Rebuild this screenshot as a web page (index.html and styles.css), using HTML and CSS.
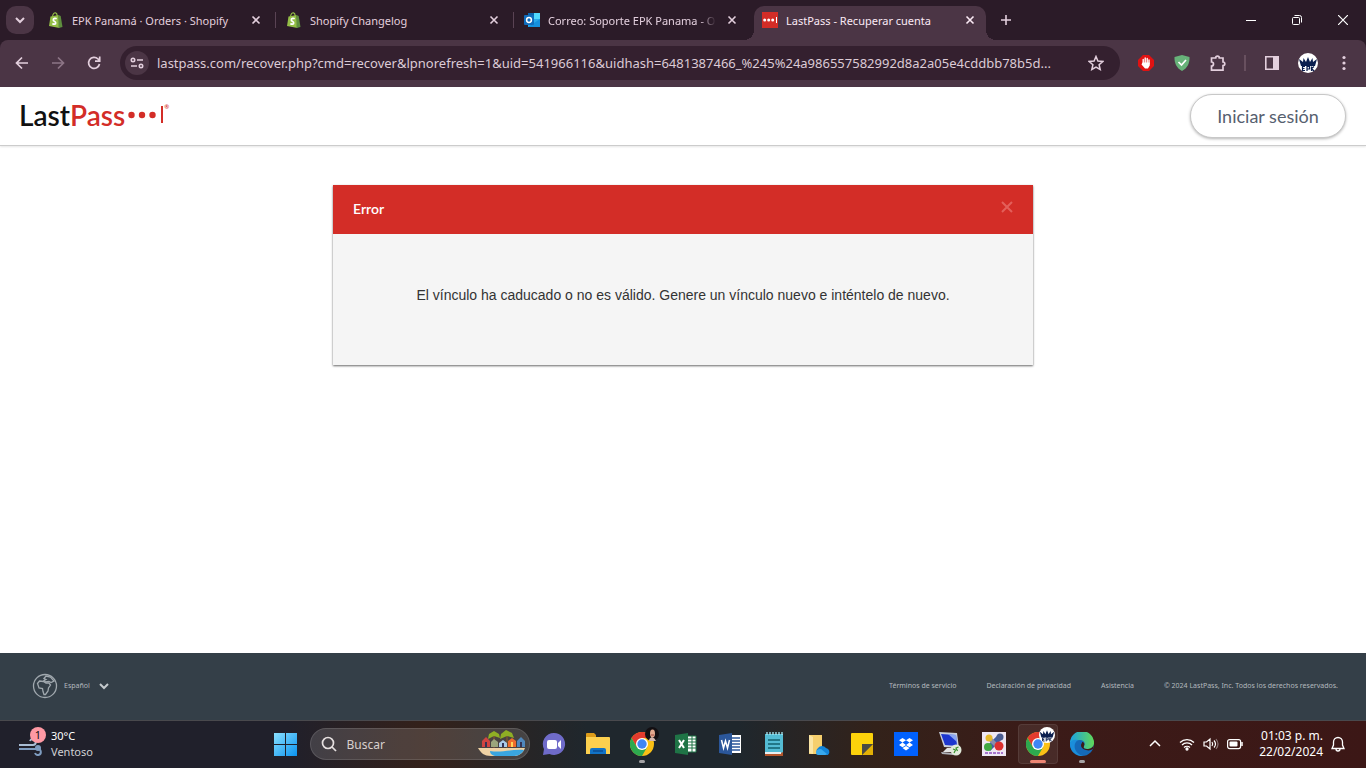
FILE: index.html
```html
<!DOCTYPE html>
<html lang="es">

<head>
    <meta charset="UTF-8">
    <meta name="viewport" content="width=device-width, initial-scale=1.0">
    <title>LastPass - Recuperar cuenta</title>
    <link rel="stylesheet" href="styles.css">
</head>

<body>
    <!-- Iconos compartidos -->
    <svg class="sprite" width="0" height="0" aria-hidden="true">
        <symbol id="i-close" viewBox="0 0 16 16">
            <path d="M4.500 4.500l7 7M11.500 4.500l-7 7" fill="none" stroke="currentColor" stroke-width="1.600" />
        </symbol>
        <symbol id="i-shopify" viewBox="0 0 16 16">
            <path d="M2.500 4.500L10.500 3l1 13L1 14z" fill="#95bf47" />
            <path d="M10.500 3l2.200 1L14.500 15l-4 1z" fill="#5e8e3e" />
            <path d="M4.500 4.500C5 1.500 6.500.6 7.500.8s1.600 1.200 1.700 3" fill="none" stroke="#95bf47" stroke-width="1.200" />
            <path d="M8.700 6.700C7.500 6 5.300 6.200 5.300 7.900c0 1.600 2.500 1.400 2.400 3.100 0 1.500-2 1.500-3.300.5" fill="none" stroke="#fff" stroke-width="1.700" />
        </symbol>
        <symbol id="i-chrome" viewBox="0 0 24 24">
            <circle cx="12" cy="12" r="12" fill="#fbc116" />
            <path d="M12 6h10.400A12 12 0 0 0 1.600 6L6.800 15z" fill="#e33b2e" />
            <path d="M1.600 6A12 12 0 0 0 12 24l5.200-9-5.200 3-5.200-3z" fill="#2da94f" />
            <circle cx="12" cy="12" r="6" fill="#fff" />
            <circle cx="12" cy="12" r="4.700" fill="#3f86f4" />
        </symbol>
        <symbol id="i-epk" viewBox="0 0 20 20">
            <circle cx="10" cy="10" r="10" fill="#fff" />
            <path d="M1 6l4 3 .5-4L8 9l2-5 2 5 2.500-4 .5 4 4-3-2 7H3z" fill="#0b1f4f" />
            <path d="M7 13.500H4.500v4H7M4.500 15.500h2M9 18v-4.500h2.500v2.500H9M13.500 13.500v4.500M16 13.500l-2.500 2 2.500 2.500" fill="none" stroke="#0b1f4f" stroke-width="1.200" />
        </symbol>
        <symbol id="i-chevron" viewBox="0 0 12 12">
            <path d="M2 4l4 4 4-4" fill="none" stroke="currentColor" stroke-width="2" />
        </symbol>
    </svg>

    <div class="tabstrip">
        <button class="tab-search" aria-label="Buscar pestañas"><svg width="12" height="12"><use href="#i-chevron" /></svg></button>
        <div class="tab">
            <svg class="favicon" viewBox="0 0 16 16"><use href="#i-shopify" /></svg>
            <span class="tab-title">EPK Panamá · Orders · Shopify</span>
            <button class="tab-close" aria-label="Cerrar"><svg width="16" height="16"><use href="#i-close" /></svg></button>
        </div>
        <div class="tab">
            <svg class="favicon" viewBox="0 0 16 16"><use href="#i-shopify" /></svg>
            <span class="tab-title">Shopify Changelog</span>
            <button class="tab-close" aria-label="Cerrar"><svg width="16" height="16"><use href="#i-close" /></svg></button>
        </div>
        <div class="tab tab-last">
            <svg class="favicon" viewBox="0 0 16 16">
                <path d="M4 1h12v14H4z" fill="#28a8ea" />
                <path d="M4 1h6v7H4z" fill="#0a64ad" />
                <path d="M10 1h6v6h-6z" fill="#50d9ff" />
                <path d="M4 15l12-8v8z" fill="#1490df" />
                <rect y="3" width="10" height="10" rx="1" fill="#0f6cbd" />
                <circle cx="5" cy="8" r="2.400" fill="none" stroke="#fff" stroke-width="1.500" />
            </svg>
            <span class="tab-title tab-fade">Correo: Soporte EPK Panama - O</span>
            <button class="tab-close" aria-label="Cerrar"><svg width="16" height="16"><use href="#i-close" /></svg></button>
        </div>
        <div class="tab tab-active">
            <svg class="favicon" viewBox="0 0 16 16">
                <rect width="16" height="16" fill="#d32d27" />
                <g fill="#fff">
                    <circle cx="2.700" cy="8" r="1.500" />
                    <circle cx="6.700" cy="8" r="1.500" />
                    <circle cx="10.700" cy="8" r="1.500" />
                    <path d="M14 5h1v6h-1z" />
                </g>
            </svg>
            <span class="tab-title">LastPass - Recuperar cuenta</span>
            <button class="tab-close" aria-label="Cerrar"><svg width="16" height="16"><use href="#i-close" /></svg></button>
        </div>
        <button class="tab-new" aria-label="Nueva pestaña">
            <svg width="12" height="12" viewBox="0 0 12 12"><path d="M6 1v10M1 6h10" stroke="currentColor" stroke-width="1.600" /></svg>
        </button>
        <div class="window-controls">
            <button aria-label="Minimizar"><svg width="10" height="10" viewBox="0 0 10 10"><path d="M0 5.500h10" stroke="#fff" /></svg></button>
            <button aria-label="Restaurar">
                <svg width="10" height="10" viewBox="0 0 10 10" fill="none" stroke="#fff">
                    <rect x=".5" y="2.500" width="7" height="7" rx="1" />
                    <path d="M2.500.5h5a2 2 0 0 1 2 2v5" />
                </svg>
            </button>
            <button aria-label="Cerrar ventana"><svg width="10" height="10" viewBox="0 0 10 10"><path d="M0 0l10 10M10 0L0 10" stroke="#fff" stroke-width="1.200" /></svg></button>
        </div>
    </div>

    <div class="toolbar">
        <button class="tool" aria-label="Atrás">
            <svg width="16" height="16" viewBox="0 0 16 16" fill="none" stroke="currentColor" stroke-width="1.700"><path d="M14 8H3M8 2.500L2.500 8 8 13.500" /></svg>
        </button>
        <button class="tool tool-off" aria-label="Adelante">
            <svg width="16" height="16" viewBox="0 0 16 16" fill="none" stroke="currentColor" stroke-width="1.700"><path d="M2 8h11M8 2.500L13.500 8 8 13.500" /></svg>
        </button>
        <button class="tool" aria-label="Recargar">
            <svg width="16" height="16" viewBox="0 0 16 16" fill="none" stroke="currentColor" stroke-width="1.700"><path d="M13.500 9A5.500 5.500 0 1 1 12 4l1.500 1.500M13.700 1.500v4.700H9" /></svg>
        </button>
        <div class="omnibox">
            <button class="site-info" aria-label="Información del sitio">
                <svg width="14" height="12" viewBox="0 0 14 12" fill="none" stroke="currentColor" stroke-width="1.600">
                    <circle cx="3" cy="3" r="1.700" />
                    <path d="M7 3h6M1 9h6" />
                    <circle cx="11" cy="9" r="1.700" />
                </svg>
            </button>
            <input class="url" type="text" aria-label="Dirección" value="lastpass.com/recover.php?cmd=recover&amp;lpnorefresh=1&amp;uid=541966116&amp;uidhash=6481387466_%245%24a986557582992d8a2a05e4cddbb78b5d...">
            <button class="star" aria-label="Añadir a marcadores">
                <svg width="16" height="16" viewBox="0 0 16 16"><path d="M8 1.500l1.900 4.600 4.900.4-3.700 3.200 1.100 4.800L8 12l-4.200 2.500 1.100-4.800L1.200 6.500l4.900-.4z" fill="none" stroke="currentColor" stroke-width="1.500" /></svg>
            </button>
        </div>
        <div class="extensions">
            <button class="tool" aria-label="AdBlock">
                <svg width="16" height="16" viewBox="0 0 16 16">
                    <path d="M5 0h6l5 5v6l-5 5H5l-5-5V5z" fill="#e01212" />
                    <path d="M5.200 9V4.500M7.200 8V3M9.200 8V3.500M11 9V5" stroke="#fff" stroke-width="1.400" stroke-linecap="round" />
                    <path d="M4.500 7.500h7.200v3L10 13.500H7l-3.500-4z" fill="#fff" />
                </svg>
            </button>
            <button class="tool" aria-label="AdGuard">
                <svg width="16" height="16" viewBox="0 0 16 16">
                    <path d="M8 0l7.500 2c.3 6-2 11-7.500 14C2.500 13 .2 8 .5 2z" fill="#67b279" />
                    <path d="M4.500 7l3 3 4.500-5" fill="none" stroke="#fff" stroke-width="1.700" />
                </svg>
            </button>
            <button class="tool" aria-label="Extensiones">
                <svg width="18" height="18" viewBox="0 0 18 18"><path d="M2.500 4h4.200a1.800 1.800 0 0 1 3.600 0H14v4a1.800 1.800 0 0 1 0 3.600v4.600H2.500V12a2 2 0 0 0 0-4z" fill="none" stroke="currentColor" stroke-width="1.700" /></svg>
            </button>
            <span class="tool-divider"></span>
            <button class="tool" aria-label="Panel lateral">
                <svg width="16" height="16" viewBox="0 0 16 16"><path d="M1.800 1.800h12.400v12.400H1.800z" fill="none" stroke="currentColor" stroke-width="1.600" /><path d="M9 1.500h5.500v13H9z" fill="currentColor" /></svg>
            </button>
            <button class="tool" aria-label="Perfil"><svg width="20" height="20"><use href="#i-epk" /></svg></button>
            <button class="tool" aria-label="Menú">
                <svg width="4" height="16" viewBox="0 0 4 16" fill="currentColor"><circle cx="2" cy="2.500" r="1.600" /><circle cx="2" cy="8" r="1.600" /><circle cx="2" cy="13.500" r="1.600" /></svg>
            </button>
        </div>
    </div>

    <header class="site-header">
        <a class="logo" href="#" aria-label="LastPass">
            <span class="logo-last">Last</span><span class="logo-pass">Pass</span>
            <svg width="36" height="18" viewBox="0 0 36 18" fill="#d32d27">
                <circle cx="3.500" cy="9" r="3.200" />
                <circle cx="14" cy="9" r="3.200" />
                <circle cx="24.500" cy="9" r="3.200" />
                <path d="M33 0h2v17h-2z" />
            </svg>
            <sup class="logo-mark">®</sup>
        </a>
        <button class="login">Iniciar sesión</button>
    </header>

    <main class="content">
        <section class="dialog">
            <div class="dialog-header">
                <h1>Error</h1>
                <button class="dialog-close" aria-label="Cerrar">
                    <svg width="12" height="12" viewBox="0 0 12 12"><path d="M1 1l10 10M11 1L1 11" stroke="currentColor" stroke-width="2" /></svg>
                </button>
            </div>
            <p class="dialog-body">El vínculo ha caducado o no es válido. Genere un vínculo nuevo e inténtelo de nuevo.</p>
        </section>
    </main>

    <footer class="site-footer">
        <label class="language">
            <svg width="26" height="26" viewBox="0 0 26 26" fill="none" stroke="currentColor" stroke-width="1.300">
                <circle cx="13" cy="13" r="11.500" />
                <path d="M5.500 10.500l2-2.500 4 .5 2.500 1.500h3l1.500 2-2 3-.5 3-2.500 3.500h-1.500l-1-3-.5-3-3.500-.5z" />
                <path d="M12 5.500l2-2.500 4.500 1 3.500 4-3 1.500-2-1-3.500.5-1.500-1.500 2-1z" />
            </svg>
            <select aria-label="Idioma">
                <option>Español</option>
            </select>
            <svg class="language-arrow" width="12" height="12"><use href="#i-chevron" /></svg>
        </label>
        <nav class="footer-links">
            <a href="#">Términos de servicio</a>
            <a href="#">Declaración de privacidad</a>
            <a href="#">Asistencia</a>
            <span>© 2024 LastPass, Inc. Todos los derechos reservados.</span>
        </nav>
    </footer>

    <div class="taskbar">
        <button class="weather">
            <span class="weather-icon">
                <svg width="26" height="24" viewBox="0 0 26 24" fill="none" stroke-width="2">
                    <path d="M0 13h14a3 3 0 1 0-3-4" stroke="#a9bdd4" />
                    <path d="M0 17h19a3 3 0 1 1-3 4" stroke="#7e9cc0" />
                    <circle cx="19" cy="16" r="3" fill="#7e9cc0" />
                </svg>
                <span class="weather-badge">1</span>
            </span>
            <span class="weather-text"><span>30°C</span><span class="weather-desc">Ventoso</span></span>
        </button>

        <div class="apps">
            <button class="app" aria-label="Inicio">
                <svg width="24" height="24" viewBox="0 0 24 24">
                    <defs><linearGradient id="win" x1="0" y1="0" x2="24" y2="24" gradientUnits="userSpaceOnUse"><stop stop-color="#8fe3ff" /><stop offset="1" stop-color="#0a93f0" /></linearGradient></defs>
                    <path d="M1 1h11v11H1zM13 1h11v11H13zM1 13h11v11H1zM13 13h11v11H13z" fill="url(#win)" />
                </svg>
            </button>
            <div class="search">
                <svg width="16" height="16" viewBox="0 0 16 16" fill="none" stroke="#e6e0e0" stroke-width="1.700"><circle cx="7" cy="7" r="5.500" /><path d="M11 11l4 4" /></svg>
                <input type="text" placeholder="Buscar" aria-label="Buscar">
                <svg class="search-art" width="50" height="28" viewBox="0 0 50 28">
                    <path d="M1 18h47c-2 5-5 7-9 8H14c-7 0-10-3-13-8z" fill="#efd2a4" />
                    <path d="M13 21c12 2 22-2 34-1-3 5-7 6-11 6H18c-3-1-5-2-5-5z" fill="#3aa5df" />
                    <path d="M17 6v12M30 6v12" stroke="#7a5230" stroke-width="1.500" />
                    <path d="M12 4l5-3 5 3 1 4-6-2-6 3zM24 4l5-4 6 3 2 5-7-2-7 3z" fill="#8fae24" />
                    <path d="M5 17v-6l4-4 4 4v6z" fill="#cf4440" />
                    <path d="M14 17v-5l3-3 4 3v5z" fill="#9aa67c" />
                    <path d="M22 17v-4l4-3 4 3v4z" fill="#a9cbea" />
                    <path d="M31 17v-6l4-3 4 3v6z" fill="#ee6b2c" />
                    <path d="M40 17v-6l4-4 4 4v6z" fill="#4f87bd" />
                    <path d="M8 17v-5h2v5zM25 17v-4h2v4zM43 17v-5h2v5z" fill="#335" />
                    <path d="M34 17v-5h2v5z" fill="#ffd35a" />
                </svg>
            </div>
            <button class="app" aria-label="Chat">
                <svg width="24" height="24" viewBox="0 0 24 24">
                    <path d="M12 1a11 11 0 1 1-4.500 21L1 23l1-6A11 11 0 0 1 12 1z" fill="#6f6bc9" />
                    <rect x="5" y="8" width="10" height="9" rx="2" fill="#fff" />
                    <path d="M16 11l3-3v9l-3-3z" fill="#fff" />
                </svg>
            </button>
            <button class="app" aria-label="Explorador de archivos">
                <svg width="24" height="24" viewBox="0 0 24 24">
                    <path d="M0 2q0-1 1-1h7l2 2v4H0z" fill="#dc9c1a" />
                    <path d="M0 5h23q1 0 1 1v16H0z" fill="#fcd04f" />
                    <path d="M4 22v-4q0-2 2-2h12q2 0 2 2v4z" fill="#1173c7" />
                    <path d="M7 19h10" stroke="#0b4c94" stroke-width="1.500" />
                </svg>
            </button>
            <button class="app app-open" aria-label="Google Chrome">
                <svg width="24" height="24"><use href="#i-chrome" /></svg>
                <svg class="app-badge" width="14" height="14" viewBox="0 0 14 14">
                    <circle cx="7" cy="7" r="7" fill="#120f12" />
                    <path d="M4 14q0-3 3-4 3 1 4 4z" fill="#d4b8b0" />
                    <ellipse cx="7.500" cy="6.500" rx="2.500" ry="4" fill="#e3a98e" />
                    <path d="M6 8h3" stroke="#a94b42" />
                </svg>
            </button>
            <button class="app" aria-label="Excel">
                <svg width="24" height="24" viewBox="0 0 24 24">
                    <path d="M12 4h10v16H12z" fill="#fff" />
                    <path d="M13 7h9M13 10h9M13 13h9M13 16h9M18 4v16M12 4h10v16H12z" fill="none" stroke="#1f7446" />
                    <path d="M1 3l13-2v22L1 21z" fill="#1f7446" />
                    <path d="M5 8l5 8M10 8l-5 8" stroke="#fff" stroke-width="2" />
                </svg>
            </button>
            <button class="app" aria-label="Word">
                <svg width="24" height="24" viewBox="0 0 24 24">
                    <path d="M12 3h11v18H12z" fill="#fff" />
                    <path d="M14 6h8M14 9h8M14 12h8M14 15h8M14 18h8" stroke="#2b579a" stroke-width="1.300" />
                    <path d="M1 3l13-2v22L1 21z" fill="#2b579a" />
                    <path d="M3.500 8l2 8 2-7 2 7 2-8" fill="none" stroke="#fff" stroke-width="1.500" />
                </svg>
            </button>
            <button class="app" aria-label="Bloc de notas">
                <svg width="24" height="24" viewBox="0 0 24 24">
                    <path d="M3 20h18v4H3z" fill="#b5562c" />
                    <path d="M3 2h18v18l-2 1H3z" fill="#54bcd4" />
                    <path d="M3 20h16v2H3z" fill="#e9eef0" />
                    <path d="M5 0v3M8 0v3M11 0v3M14 0v3M17 0v3M20 0v3" stroke="#a9e8f3" stroke-width="1.300" />
                    <path d="M6 8h12M6 12h12M6 16h12" stroke="#12606e" stroke-width="1.600" />
                </svg>
            </button>
            <button class="app" aria-label="OneDrive">
                <svg width="24" height="24" viewBox="0 0 24 24">
                    <path d="M3 3h13v19H3z" fill="#f6cf6d" />
                    <path d="M3 3l4 2v17l-4-1z" fill="#fbe5a5" />
                    <path d="M13 23a4 4 0 0 1-1-7 5 5 0 0 1 8 0 4 4 0 0 1 2 7z" fill="#1284d8" />
                    <path d="M10 21q0-4 5-4l6 5-2 1h-7q-2 0-2-2z" fill="#38a9ee" />
                </svg>
            </button>
            <button class="app" aria-label="Notas rápidas">
                <svg width="24" height="24" viewBox="0 0 24 24">
                    <path d="M2 1h20q1 0 1 1v10L12 23H2q-1 0-1-1V2q0-1 1-1z" fill="#fcd20b" />
                    <path d="M23 12v11H12z" fill="#e2b006" />
                    <path d="M12 12h11L12 23z" fill="#4a4a44" />
                </svg>
            </button>
            <button class="app" aria-label="Dropbox">
                <svg width="24" height="24" viewBox="0 0 24 24">
                    <path d="M0 0h24v24H0z" fill="#0061fe" />
                    <path d="M8.500 6L12 8.300 8.500 10.600 5 8.300zM15.500 6L19 8.300l-3.500 2.300L12 8.300zM8.500 10.600L12 12.900l-3.500 2.300L5 12.900zM15.500 10.600L19 12.900l-3.500 2.300L12 12.900zM12 13.900l3.500 2.200-3.500 2.300-3.500-2.300z" fill="#fff" />
                </svg>
            </button>
            <button class="app" aria-label="Escritorio remoto">
                <svg width="24" height="24" viewBox="0 0 24 24">
                    <path d="M1 0l18 1 2 15-15-1z" fill="#c9cfdb" />
                    <path d="M3 2l15 1 1 11-12-1z" fill="#1c36ce" />
                    <path d="M10 2l8 1 1 7z" fill="#8aa5f2" />
                    <path d="M9 16h7l1 4H5z" fill="#e1e3e4" />
                    <path d="M3 20l12 1v2L4 22z" fill="#aeb1b8" />
                    <circle cx="18" cy="18" r="5.500" fill="#e1eadb" />
                    <path d="M15 17l2.500 1-1.500 3M20.500 15l-2.500 1 1.500 3" fill="none" stroke="#39912c" stroke-width="1.200" />
                </svg>
            </button>
            <button class="app" aria-label="SQL">
                <svg width="24" height="24" viewBox="0 0 24 24">
                    <path d="M0 0h24v24H0z" fill="#eee7f4" />
                    <path d="M6 17L18 5" stroke="#405ea5" stroke-width="6" />
                    <path d="M7 6l10 10" stroke="#888eaa" stroke-width="4" />
                    <circle cx="7" cy="6" r="3.500" fill="#e6b92c" />
                    <circle cx="18" cy="5" r="3.500" fill="#4a5d92" />
                    <circle cx="6" cy="15" r="4" fill="#40a843" />
                    <circle cx="17" cy="14" r="4.500" fill="#dc3030" />
                    <path d="M3 21h18" stroke="#a775cd" stroke-width="2" stroke-dasharray="3 1" />
                </svg>
            </button>
            <button class="app app-open app-current" aria-label="Google Chrome">
                <svg width="24" height="24"><use href="#i-chrome" /></svg>
                <svg class="app-badge" width="16" height="16" viewBox="0 0 20 20"><use href="#i-epk" /></svg>
            </button>
            <button class="app app-open" aria-label="Microsoft Edge">
                <svg width="24" height="24" viewBox="0 0 24 24">
                    <defs><linearGradient id="edge" x1="0" x2="1"><stop stop-color="#1ba0e2" /><stop offset="1" stop-color="#61d957" /></linearGradient></defs>
                    <circle cx="12" cy="12" r="12" fill="#1569b8" />
                    <path d="M0 11A12 12 0 0 1 24 11c0 4-3 6-7 6-3 0-4-1-3-3 2-4-1-6-4-6-4 0-8 1-10 3z" fill="url(#edge)" />
                    <path d="M0 11c1-3 5-4 8-3-3 2-4 5-3 9 1 3 4 6 8 7A12 12 0 0 1 0 11z" fill="#1b8edb" />
                    <path d="M12 11c-2 2-1 6 4 7 3 1 5 0 7-1l1-5c-1 4-4 5-7 5-3 0-4-1-3-3 1-2 0-4-2-4z" fill="#3c1b18" />
                </svg>
            </button>
        </div>

        <div class="tray">
            <button class="tray-more" aria-label="Iconos ocultos"><svg width="12" height="12" viewBox="0 0 12 12"><path d="M1 8l5-5 5 5" fill="none" stroke="#fff" stroke-width="1.500" /></svg></button>
            <button class="tray-status" aria-label="Red, volumen y batería">
                <svg width="16" height="14" viewBox="0 0 16 14" fill="none" stroke="#fff" stroke-width="1.300">
                    <path d="M1 5.500a10 10 0 0 1 14 0M3 8a7 7 0 0 1 10 0M5 10.500a4.300 4.300 0 0 1 6 0" />
                    <circle cx="8" cy="12" r="1" fill="#fff" />
                </svg>
                <svg width="16" height="14" viewBox="0 0 16 14" fill="none" stroke="#fff" stroke-width="1.200">
                    <path d="M1 5h2.500L7 2v10L3.500 9H1zM9 5q1.500 2 0 4M11 3.500q3 3.500 0 7" />
                    <path d="M13 2q4 5 0 10" opacity=".4" />
                </svg>
                <svg width="16" height="14" viewBox="0 0 16 14">
                    <rect x=".6" y="2.600" width="13" height="9" rx="2" fill="none" stroke="#fff" stroke-width="1.200" />
                    <rect x="2.500" y="4.500" width="8" height="5" rx="1" fill="#fff" />
                    <path d="M15 5v4" stroke="#fff" stroke-width="1.500" />
                </svg>
            </button>
            <button class="clock"><span>01:03 p. m.</span><span>22/02/2024</span></button>
            <button class="bell" aria-label="Notificaciones"><svg width="14" height="16" viewBox="0 0 14 16" fill="none" stroke="#fff" stroke-width="1.300"><path d="M1 12.500h12L11.500 9V6a4.500 4.500 0 0 0-9 0v3zM5 13a2 2 0 0 0 4 0" /></svg></button>
        </div>
    </div>
</body>

</html>
```

FILE: styles.css
```css
* {
    box-sizing: border-box;
}

body {
    display: flex;
    flex-direction: column;
    min-height: 100vh;
    margin: 0;
    background-color: #fff;
    font-family: "Noto Sans", "Open Sans", sans-serif;
    font-size: 11px;
}

button,
input,
select {
    margin: 0;
    padding: 0;
    border: none;
    outline: none;
    background: none;
    color: inherit;
    font: inherit;
}

button {
    display: flex;
    align-items: center;
    justify-content: center;
    flex-shrink: 0;
}

a {
    color: inherit;
    text-decoration: none;
}

svg {
    display: block;
    flex-shrink: 0;
}

.sprite {
    position: absolute;
}

/* Pestañas */
.tabstrip {
    position: relative;
    display: flex;
    align-items: center;
    height: 40px;
    padding-left: 6px;
    background-color: #2b1b28;
    color: #e3cfdd;
}

.tab-search {
    width: 28px;
    height: 28px;
    margin-right: 6px;
    border-radius: 10px;
    background-color: #4b3545;
}

.tab {
    position: relative;
    display: flex;
    align-items: center;
    flex: 0 1 232px;
    gap: 8px;
    height: 28px;
    min-width: 0;
    margin-right: 6px;
    padding: 0 8px;
}

.tab::after {
    content: "";
    position: absolute;
    right: -4px;
    width: 1px;
    height: 16px;
    background-color: #5a4354;
}

.tab-last::after {
    display: none;
}

.favicon {
    width: 16px;
    height: 16px;
}

.tab-title {
    flex: 1;
    overflow: hidden;
    white-space: nowrap;
}

.tab-fade {
    -webkit-mask-image: linear-gradient(to left, transparent, #000 16px);
    mask-image: linear-gradient(to left, transparent, #000 16px);
}

.tab-active {
    align-self: flex-end;
    height: 34px;
    padding-bottom: 6px;
    border-radius: 10px 10px 0 0;
    background-color: #4b3545;
    color: #fbeaf5;
}

/* Curvas inferiores de la pestaña activa */
.tab-active::before,
.tab-active::after {
    content: "";
    position: absolute;
    bottom: 0;
    width: 10px;
    height: 10px;
}

.tab-active::before {
    left: -10px;
    background: radial-gradient(circle at 0 0, transparent 10px, #4b3545 10px);
}

.tab-active::after {
    right: -10px;
    background: radial-gradient(circle at 100% 0, transparent 10px, #4b3545 10px);
}

.tab-new {
    width: 28px;
    height: 28px;
}

.window-controls {
    display: flex;
    margin-left: auto;
}

.window-controls button {
    width: 46px;
    height: 40px;
}

/* Barra de direcciones */
.toolbar {
    display: flex;
    align-items: center;
    height: 47px;
    padding: 0 4px 1px;
    border-radius: 8px 8px 0 0;
    background-color: #4b3545;
    box-shadow: 0 -8px 0 #2b1b28;
    color: #e3cfdd;
}

.tool {
    width: 36px;
    height: 34px;
}

.tool-off {
    color: #8d7586;
}

.omnibox {
    display: flex;
    align-items: center;
    flex: 1;
    height: 34px;
    margin: 0 8px;
    padding: 0 6px 0 5px;
    border-radius: 17px;
    background-color: #34202f;
}

.site-info {
    width: 24px;
    height: 24px;
    margin-right: 8px;
    border-radius: 50%;
    background-color: #4b3545;
}

.url {
    flex: 1;
    min-width: 0;
    color: #dccbd6;
    font-size: 13px;
    text-overflow: ellipsis;
}

.star {
    width: 36px;
    height: 34px;
}

.extensions {
    display: flex;
    align-items: center;
}

.tool-divider {
    width: 2px;
    height: 16px;
    margin: 0 8px;
    background-color: #68505f;
}

/* Cabecera del sitio */
.site-header {
    display: flex;
    align-items: center;
    justify-content: space-between;
    height: 59px;
    padding: 0 20px 0 19px;
    border-bottom: 1px solid #ccc;
    box-shadow: 0 1px 2px rgba(0, 0, 0, 0.1);
}

.logo {
    display: flex;
    align-items: center;
    padding-bottom: 2px;
    font-family: Lato, sans-serif;
    font-size: 28px;
    font-weight: 600;
    line-height: 32px;
}

.logo-last {
    color: #111;
}

.logo-pass {
    margin-right: 3px;
    color: #d32d27;
}

.logo-mark {
    align-self: flex-start;
    color: #d32d27;
    font-size: 6px;
    line-height: 16px;
}

.login {
    width: 156px;
    height: 44px;
    border: 1px solid #c8c8c8;
    border-radius: 22px;
    background-color: #fff;
    box-shadow: 0 1px 3px rgba(0, 0, 0, 0.3);
    color: #56606f;
    font-family: Lato, sans-serif;
    font-size: 18px;
}

/* Mensaje de error */
.content {
    flex: 1;
    padding: 39px 20px;
}

.dialog {
    max-width: 700px;
    margin: 0 auto;
    background-color: #f5f5f5;
    box-shadow: 0 1px 2px rgba(0, 0, 0, 0.6);
}

.dialog-header {
    display: flex;
    align-items: center;
    justify-content: space-between;
    height: 49px;
    padding: 0 20px 2px;
    background-color: #d32d27;
    color: #fff;
}

.dialog-header h1 {
    margin: 0;
    font-family: Lato, sans-serif;
    font-size: 14px;
    font-weight: 600;
}

.dialog-close {
    padding-bottom: 4px;
    color: #e35f5a;
}

.dialog-body {
    margin: 0;
    padding: 51px 40px 60px;
    color: #333;
    font-family: "Liberation Sans", Arial, sans-serif;
    font-size: 14px;
    line-height: 20px;
    text-align: center;
}

/* Pie de página */
.site-footer {
    display: flex;
    align-items: center;
    justify-content: space-between;
    height: 67px;
    padding: 0 28px 2px 32px;
    background-color: #343f48;
    color: #b3b9be;
    font-size: 7px;
}

.language {
    display: flex;
    align-items: center;
    gap: 6px;
    color: #a0a8ae;
}

.language select {
    width: 28px;
    appearance: none;
    color: #b3b9be;
}

.language-arrow {
    color: #c5cacd;
}

.footer-links {
    display: flex;
    gap: 30px;
}

/* Barra de tareas */
.taskbar {
    display: grid;
    grid-template-columns: 1fr auto 1fr;
    align-items: center;
    height: 48px;
    background: linear-gradient(to right, #20202b 0, #20202b 21%, #34211a 31%, #1f272d 43%, #1f272d 54%, #33221a 64%, #3b1b18 76%, #3c1716 100%);
    box-shadow: inset 0 1px 0 #49494d;
    color: #fff;
}

.weather {
    justify-self: start;
    gap: 6px;
    padding-left: 19px;
}

.weather-icon {
    position: relative;
}

.weather-badge {
    position: absolute;
    top: -5px;
    left: 11px;
    width: 16px;
    height: 16px;
    border-radius: 50%;
    background-color: #ff99a4;
    color: #111;
    font-size: 11px;
    line-height: 16px;
    text-align: center;
}

.weather-text,
.clock {
    display: flex;
    flex-direction: column;
    line-height: 16px;
}

.weather-text {
    align-items: flex-start;
}

.weather-desc {
    color: #d0d0d4;
}

.apps {
    display: flex;
    align-items: center;
}

.app {
    position: relative;
    width: 44px;
    height: 48px;
}

.app-open::after {
    content: "";
    position: absolute;
    bottom: 5px;
    width: 6px;
    height: 3px;
    border-radius: 2px;
    background-color: #a5a3a5;
}

.app-current::before {
    content: "";
    position: absolute;
    top: 4px;
    left: 2px;
    right: 2px;
    bottom: 4px;
    border: 1px solid rgba(255, 255, 255, 0.08);
    border-radius: 4px;
    background-color: rgba(255, 255, 255, 0.07);
}

.app-current::after {
    width: 16px;
    background-color: #ee8573;
}

.app-current svg {
    position: relative;
}

.app .app-badge {
    position: absolute;
    top: 7px;
    right: 5px;
}

.search {
    display: flex;
    align-items: center;
    gap: 10px;
    width: 220px;
    height: 32px;
    margin: 0 2px 0 3px;
    padding: 0 2px 0 10px;
    border: 1px solid rgba(255, 255, 255, 0.12);
    border-radius: 16px;
    background-color: rgba(255, 255, 255, 0.14);
}

.search input {
    flex: 1;
    min-width: 0;
    font-size: 12px;
}

.search input::placeholder {
    color: #d8d0ce;
    opacity: 1;
}

.tray {
    display: flex;
    align-items: center;
    justify-self: end;
    padding-right: 21px;
}

.tray-more {
    margin-right: 18px;
}

.tray-status {
    gap: 8px;
    margin-right: 16px;
}

.clock {
    align-items: flex-end;
    margin-right: 8px;
    font-size: 12px;
}
```
